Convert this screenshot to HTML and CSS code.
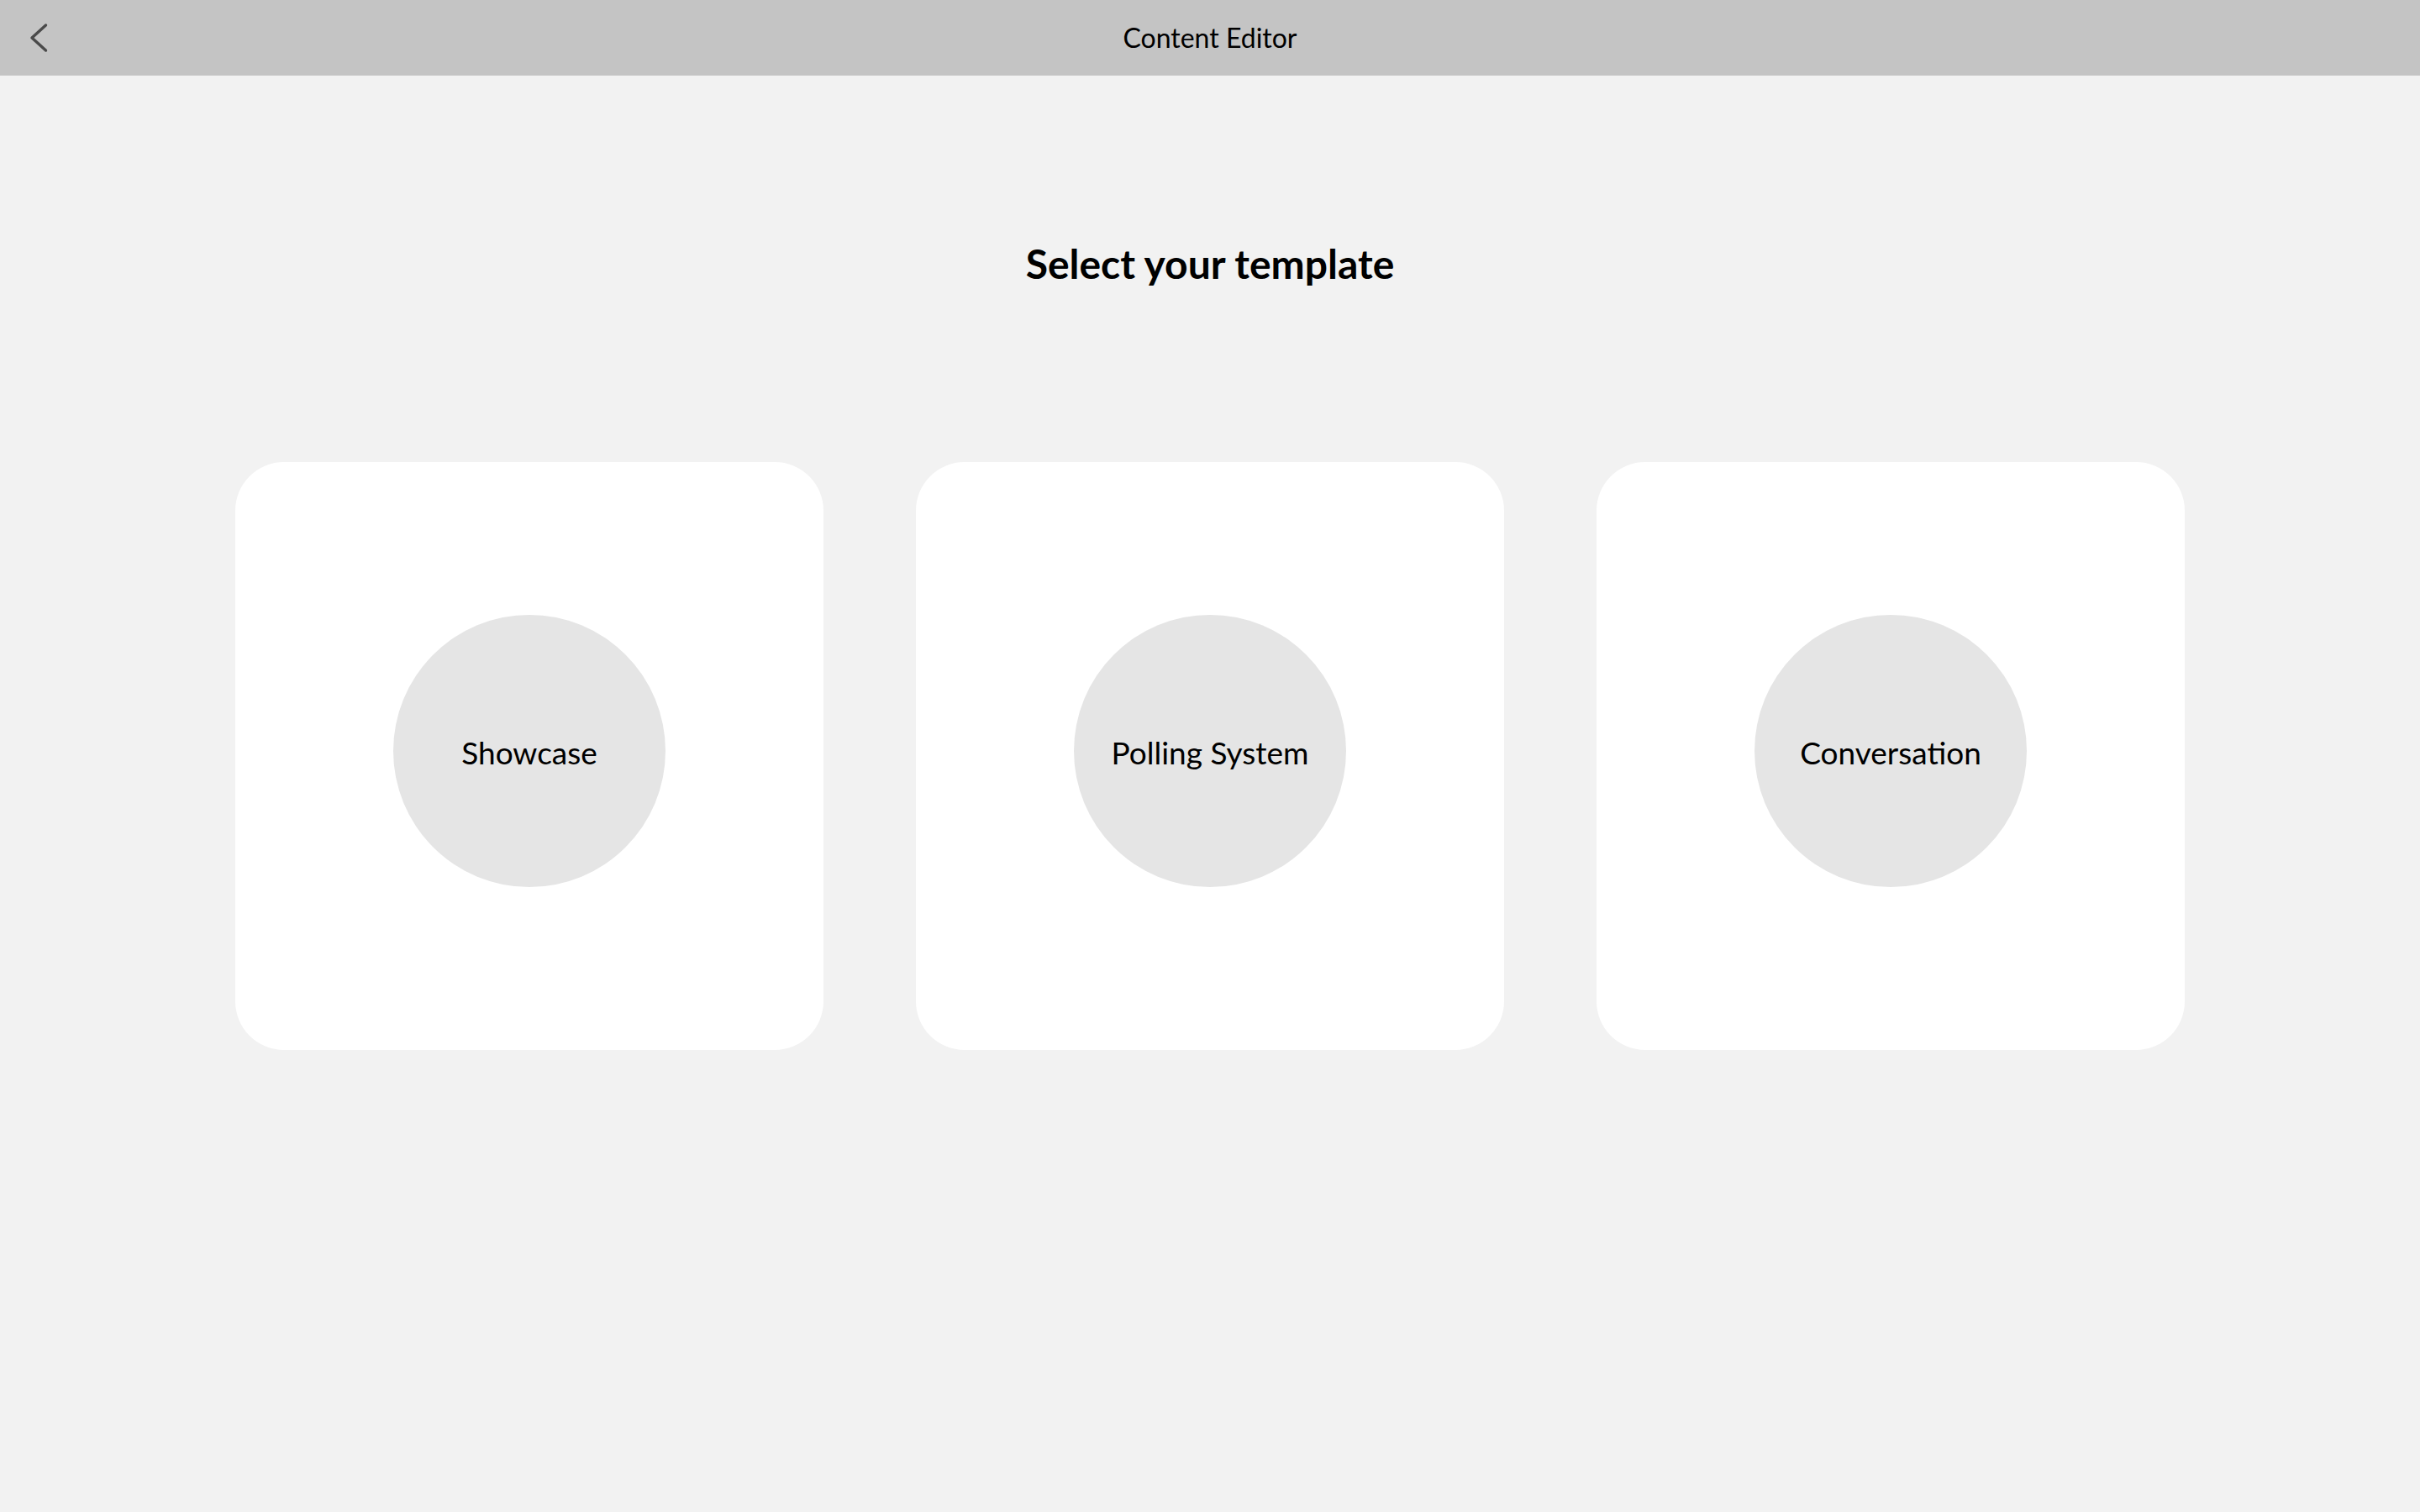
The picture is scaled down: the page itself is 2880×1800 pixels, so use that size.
FILE: index.html
```html
<!DOCTYPE html>
<html lang="en">
<head>
<meta charset="utf-8">
<title>Content Editor</title>
<link rel="stylesheet" href="styles.css">
</head>
<body>
<header class="topbar">
  <div class="topbar-left">
    <button class="back-btn" aria-label="Back">
      <svg width="24" height="36" viewBox="0 0 24 36" aria-hidden="true">
        <polyline points="19.5,3 3,18 19.5,33" fill="none" stroke="#4a4a4a" stroke-width="3.4" stroke-linecap="round" stroke-linejoin="round"/>
      </svg>
    </button>
  </div>
  <div class="topbar-title">Content Editor</div>
  <div class="topbar-right"></div>
</header>
<main class="content">
  <h1 class="page-title">Select your template</h1>
  <section class="templates">
    <div class="template-card"><div class="template-circle">Showcase</div></div>
    <div class="template-card"><div class="template-circle">Polling System</div></div>
    <div class="template-card"><div class="template-circle">Conversation</div></div>
  </section>
</main>
</body>
</html>
```

FILE: styles.css
```css
html, body {
  margin: 0;
  padding: 0;
}
body {
  background: #f2f2f2;
  font-family: "Lato", "Liberation Sans", sans-serif;
  color: #000;
  min-height: 1800px;
}
.topbar {
  height: 90px;
  background: #c4c4c4;
  display: grid;
  grid-template-columns: 1fr auto 1fr;
  align-items: center;
}
.topbar-left {
  display: flex;
  align-items: center;
  padding-left: 35px;
}
.back-btn {
  background: none;
  border: 0;
  padding: 0;
  margin: 0;
  display: flex;
  cursor: pointer;
}
.topbar-title {
  font-size: 32px;
  font-weight: 400;
  line-height: 40px;
  color: #000;
}
.content {
  padding-top: 196px;
  display: flex;
  flex-direction: column;
  align-items: center;
}
.page-title {
  margin: 0;
  font-size: 48px;
  line-height: 56px;
  font-weight: 700;
}
.templates {
  margin-top: 208px;
  display: flex;
  justify-content: center;
  gap: 110px;
}
.template-card {
  width: 700px;
  height: 700px;
  background: #fff;
  border-radius: 58px;
  display: flex;
  align-items: center;
  justify-content: center;
  padding-bottom: 12px;
  box-sizing: border-box;
}
.template-circle {
  width: 324px;
  height: 324px;
  border-radius: 50%;
  background: #e5e5e5;
  display: flex;
  align-items: center;
  justify-content: center;
  font-size: 37px;
  line-height: 48px;
  padding-top: 4px;
  box-sizing: border-box;
}
```
